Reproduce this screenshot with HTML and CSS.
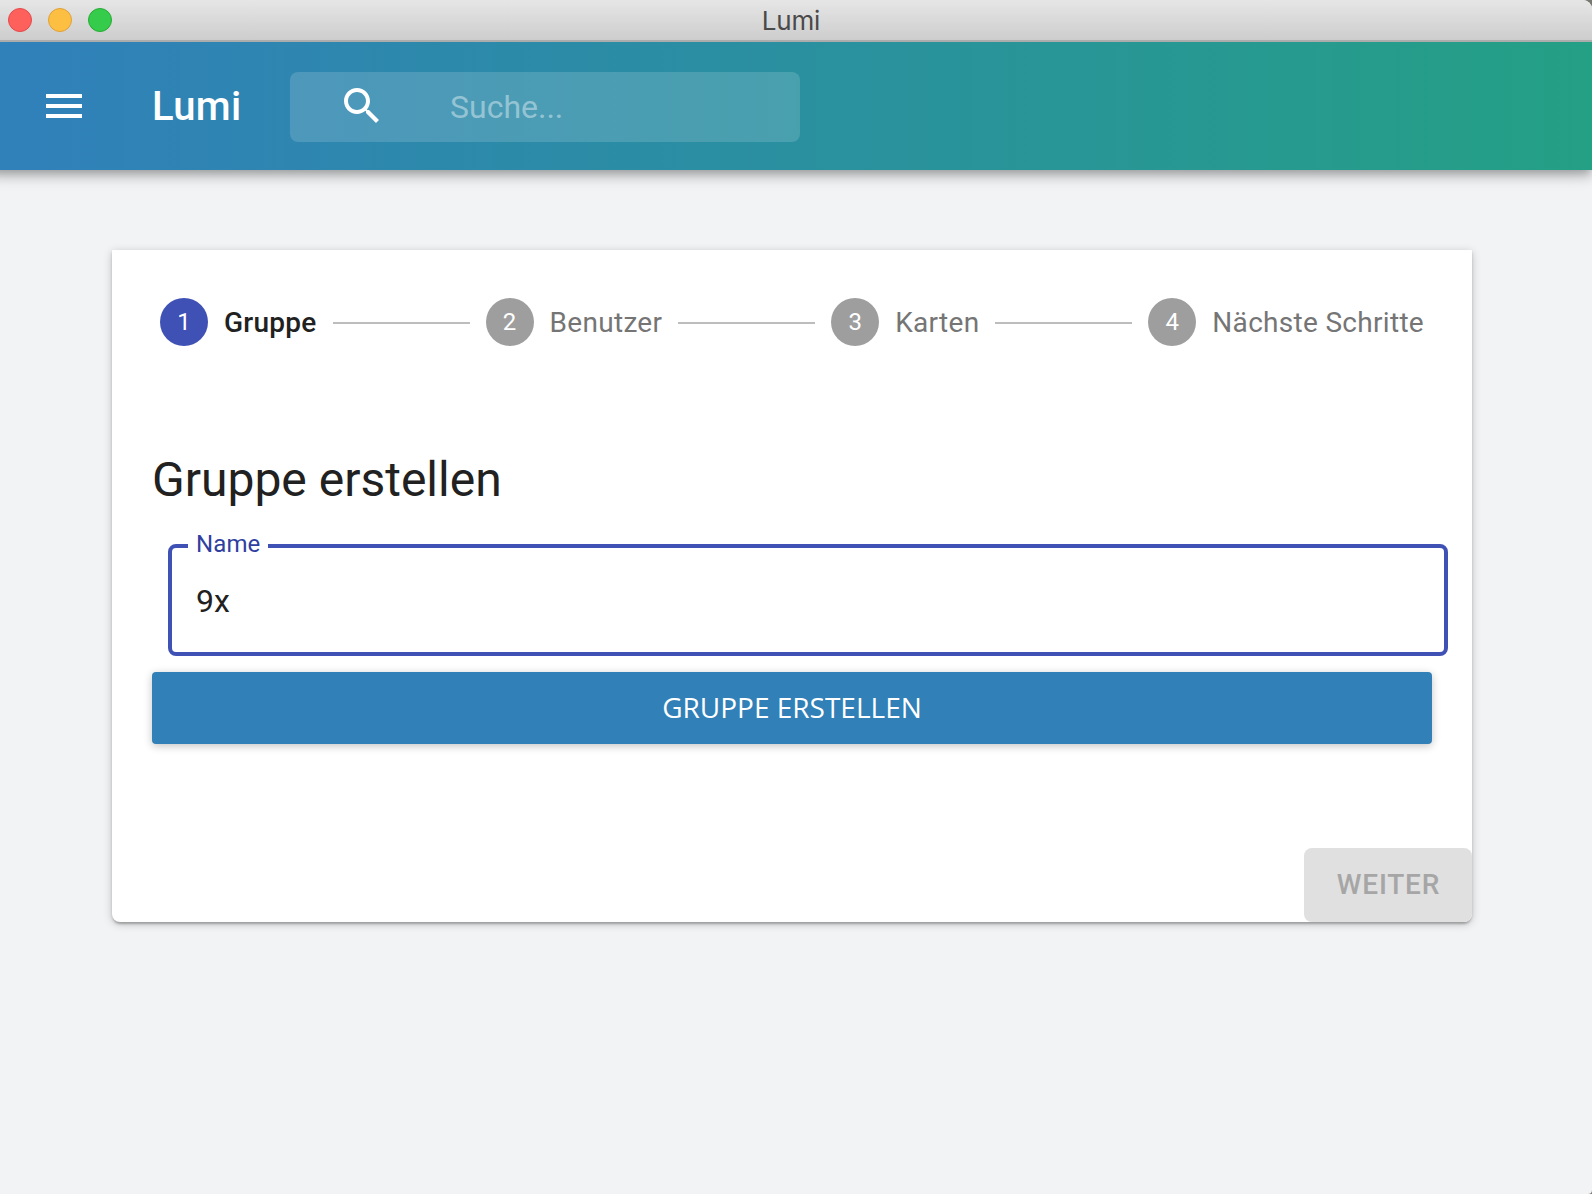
FILE: index.html
```html
<!DOCTYPE html>
<html lang="de">
<head>
<meta charset="utf-8">
<title>Lumi</title>
<link rel="stylesheet" href="styles.css">
</head>
<body>
<div class="window">
  <header class="titlebar">
    <div class="lights"><span class="light close"></span><span class="light minimize"></span><span class="light maximize"></span></div>
    <span class="window-title">Lumi</span>
  </header>
  <nav class="appbar">
    <svg class="icon menu" viewBox="0 0 24 24"><path d="M3 18h18v-2H3v2zm0-5h18v-2H3v2zm0-7v2h18V6H3z"/></svg>
    <span class="brand">Lumi</span>
    <div class="search">
      <svg class="icon" viewBox="0 0 24 24"><path d="M15.5 14h-.79l-.28-.27C15.41 12.59 16 11.11 16 9.5 16 5.91 13.09 3 9.5 3S3 5.91 3 9.5 5.91 16 9.5 16c1.61 0 3.09-.59 4.23-1.57l.27.28v.79l5 4.99L20.49 19l-4.99-5zm-6 0C7.01 14 5 11.99 5 9.5S7.01 5 9.5 5 14 7.01 14 9.5 11.99 14 9.5 14z"/></svg>
      <span class="placeholder">Suche...</span>
    </div>
  </nav>
  <main class="content">
    <section class="card">
      <div class="stepper">
        <div class="step active"><span class="number">1</span><span class="label">Gruppe</span></div>
        <span class="line"></span>
        <div class="step"><span class="number">2</span><span class="label">Benutzer</span></div>
        <span class="line"></span>
        <div class="step"><span class="number">3</span><span class="label">Karten</span></div>
        <span class="line"></span>
        <div class="step"><span class="number">4</span><span class="label">Nächste Schritte</span></div>
      </div>
      <div class="form">
        <h1 class="heading">Gruppe erstellen</h1>
        <fieldset class="field">
          <legend class="legend">Name</legend>
          <span class="value">9x</span>
        </fieldset>
        <button class="submit">GRUPPE ERSTELLEN</button>
      </div>
      <div class="actions"><button class="next" disabled>WEITER</button></div>
    </section>
  </main>
</div>
</body>
</html>
```
FILE: styles.css
```css
* { box-sizing: border-box; }

body {
  margin: 0;
  background: #77776f;
  font-family: Roboto, "Liberation Sans", sans-serif;
}

.window {
  display: flex;
  flex-direction: column;
  height: 1194px;
  overflow: hidden;
  background: #f1f3f5;
  border-radius: 0 9px 4px 0;
}

.titlebar {
  position: relative;
  z-index: 2;
  display: grid;
  grid-template-columns: 1fr auto 1fr;
  align-items: center;
  height: 42px;
  padding: 0 18px 0 8px;
  background: linear-gradient(#e6e6e6, #cdcdcd);
  border-bottom: 2px solid #acacac;
}

.lights { display: flex; gap: 16px; }

.light {
  width: 24px;
  height: 24px;
  border: 1px solid;
  border-radius: 50%;
}

.close { background: #fe605c; border-color: #e5494a; }
.minimize { background: #fdbf42; border-color: #dfa13a; }
.maximize { background: #35cb4b; border-color: #28ac35; }

.window-title {
  padding-top: 2px;
  color: #4a4a4a;
  font-family: Inter, sans-serif;
  font-size: 26px;
  line-height: 38px;
  letter-spacing: -.2px;
}

.appbar {
  position: relative;
  z-index: 1;
  display: flex;
  align-items: center;
  flex: none;
  height: 128px;
  margin-left: -12px;
  padding-left: 52px;
  color: #fff;
  background: linear-gradient(90deg, #3080ba 12px, #24a085);
  box-shadow: 0 4px 8px -2px rgba(0, 0, 0, .2), 0 8px 10px rgba(0, 0, 0, .14), 0 2px 20px rgba(0, 0, 0, .12);
}

.icon { width: 48px; height: 48px; fill: currentColor; }

.menu { margin-right: 64px; }

.brand {
  width: 138px;
  font-size: 40px;
  font-weight: 500;
  letter-spacing: .3px;
}

.search {
  display: flex;
  align-items: flex-start;
  width: 510px;
  height: 70px;
  padding: 10px 48px;
  margin-top: 2px;
  background: rgba(255, 255, 255, .15);
  border-radius: 8px;
}

.placeholder {
  margin-left: 64px;
  color: rgba(255, 255, 255, .42);
  font-size: 32px;
  line-height: 50px;
}

.content { padding: 80px 120px 0 112px; }

.card {
  display: flex;
  flex-direction: column;
  height: 672px;
  background: #fff;
  border-radius: 0 0 8px 8px;
  box-shadow: 0 2px 10px rgba(0, 0, 0, .2), 0 2px 3px rgba(0, 0, 0, .16), 0 4px 2px -2px rgba(0, 0, 0, .12);
}

.stepper {
  display: flex;
  align-items: center;
  gap: 16px;
  padding: 48px;
}

.step { display: flex; align-items: center; gap: 16px; }

.number {
  width: 48px;
  height: 48px;
  color: #fff;
  background: #9e9e9e;
  border-radius: 50%;
  font-size: 24px;
  line-height: 48px;
  text-align: center;
}

.label {
  padding-top: 2px;
  color: #757575;
  font-size: 28px;
  line-height: 42px;
  letter-spacing: .3px;
}

.active .number { background: #3f51b5; }
.active .label { color: #212121; font-weight: 500; letter-spacing: .27px; }

.line { flex: 1; height: 2px; margin-top: 2px; background: #bdbdbd; }

.form {
  display: flex;
  flex-direction: column;
  padding: 58px 40px 0;
}

.heading {
  margin: 0;
  color: #212121;
  font-size: 48px;
  font-weight: 400;
  line-height: 56px;
}

.field {
  width: 1280px;
  height: 126px;
  margin: 22px 0 16px 16px;
  padding: 0 24px 0 16px;
  border: 4px solid #3f51b5;
  border-radius: 8px;
}

.legend {
  height: 32px;
  padding: 0 8px;
  color: #303f9f;
  font-size: 24px;
  line-height: 28px;
  letter-spacing: .1px;
}

.value {
  display: block;
  padding: 20px 8px;
  color: #212121;
  font-size: 32px;
  line-height: 38px;
}

.submit {
  height: 72px;
  padding: 0 0 2px;
  color: #fff;
  background: #3180b7;
  border: 0;
  border-radius: 4px;
  box-shadow: 0 2px 8px rgba(0, 0, 0, .24);
  font: 400 28px "Open Sans", sans-serif;
}

.actions { display: flex; justify-content: flex-end; margin-top: auto; }

.next {
  width: 168px;
  height: 74px;
  padding: 0 0 2px 1px;
  color: #a6a6a6;
  background: #e0e0e0;
  border: 0;
  border-radius: 8px;
  font: 500 28px Roboto, sans-serif;
  letter-spacing: .8px;
}
```
